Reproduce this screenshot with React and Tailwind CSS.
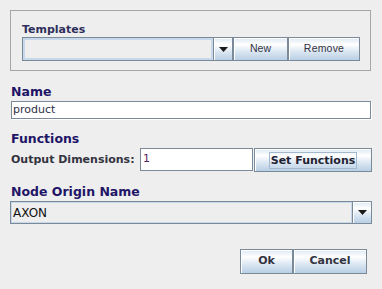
import React from "react";

const Arrow = () => (
  <svg width="9" height="5" viewBox="0 0 9 5" className="block">
    <path d="M0 0 H9 L4.5 5 Z" fill="#1a1a1a" />
  </svg>
);

const btnBg =
  "bg-[linear-gradient(to_bottom,#dde8f3_0%,#ffffff_30%,#dde8f3_60%,#b8cfe5_100%)]";

function Button({ className = "", children, textClass = "" }) {
  return (
    <div
      className={`flex items-center justify-center border border-[#7a8a99] ${btnBg} shadow-[inset_1px_1px_0_#ffffff] ${className}`}
    >
      <span className={textClass}>{children}</span>
    </div>
  );
}

function Combo({ className = "", inner = "", children }) {
  return (
    <div className={`flex border border-[#7a8a99] bg-[#eeeeee] ${className}`}>
      <div className={`flex-1 flex items-center ${inner}`}>{children}</div>
      <div
        className={`w-[19px] flex items-center justify-center border-l border-[#7a8a99] ${btnBg} shadow-[inset_1px_1px_0_#ffffff]`}
      >
        <Arrow />
      </div>
    </div>
  );
}

export default function App() {
  return (
    <div className="w-[382px] h-[289px] overflow-hidden bg-[#eeeeee] font-['DejaVu_Sans',sans-serif] flex flex-col px-[10px] pt-[10px]">
      {/* Templates panel */}
      <div className="w-[361px] h-[61px] border border-[#a5a5a5] pt-[12px] pl-[11px] flex flex-col">
        <div className="h-[13px] leading-[13px] text-[11px] font-bold text-[#2e2e5a]">
          Templates
        </div>
        <div className="mt-[1px] h-[24px] flex">
          <Combo
            className="w-[211px]"
            inner="shadow-[inset_0_0_0_2px_#c6d8ea]"
          />
          <Button
            className="w-[55px]"
            textClass="text-[10.5px] font-['Liberation_Sans',sans-serif] text-[#333344]"
          >
            New
          </Button>
          <Button
            className="w-[72px]"
            textClass="text-[10.5px] tracking-[0.2px] font-['Liberation_Sans',sans-serif] text-[#333344]"
          >
            Remove
          </Button>
        </div>
      </div>

      {/* Name */}
      <div className="mt-[13px] h-[15px] leading-[15px] text-[12.5px] font-bold text-[#1f1566] pl-[1px]">
        Name
      </div>
      <div className="mt-[2px] ml-[1px] w-[360px] h-[18px] border border-[#7a8a99] bg-white shadow-[1px_1px_0_#ffffff] flex items-center pl-[1px] text-[11px] text-[#2f2f45]">
        product
      </div>

      {/* Functions */}
      <div className="mt-[12px] h-[15px] leading-[15px] text-[12.5px] font-bold text-[#1f1566] pl-[1px]">
        Functions
      </div>
      <div className="mt-[2px] h-[24px] flex">
        <div className="w-[130px] pl-[1px] flex items-center text-[11px] font-bold text-[#333340]">
          Output Dimensions:
        </div>
        <div className="w-[113px] h-[23px] border border-[#7a8a99] bg-white flex items-center pl-[2px] text-[11px] text-[#5a1f5f]">
          1
        </div>
        <Button
          className="ml-[1px] w-[118px] h-[24px]"
          textClass="text-[11px] font-bold text-[#222233] border border-[#a3b8cc] h-[17px] leading-[15px] px-[1px]"
        >
          Set Functions
        </Button>
      </div>

      {/* Node Origin Name */}
      <div className="mt-[12px] h-[15px] leading-[15px] text-[12.5px] font-bold text-[#1f1566] pl-[1px]">
        Node Origin Name
      </div>
      <Combo
        className="mt-[2px] w-[362px] h-[23px]"
        inner="shadow-[inset_0_0_0_1px_#c6d8ea] pl-[2px] text-[12px] text-[#111111]"
      >
        AXON
      </Combo>

      {/* Buttons */}
      <div className="mt-[25px] h-[25px] flex justify-end pr-[5px]">
        <Button
          className="w-[53px]"
          textClass="text-[11px] font-bold text-[#333340]"
        >
          Ok
        </Button>
        <Button
          className="w-[74px]"
          textClass="text-[11px] font-bold text-[#333340]"
        >
          Cancel
        </Button>
      </div>
    </div>
  );
}
